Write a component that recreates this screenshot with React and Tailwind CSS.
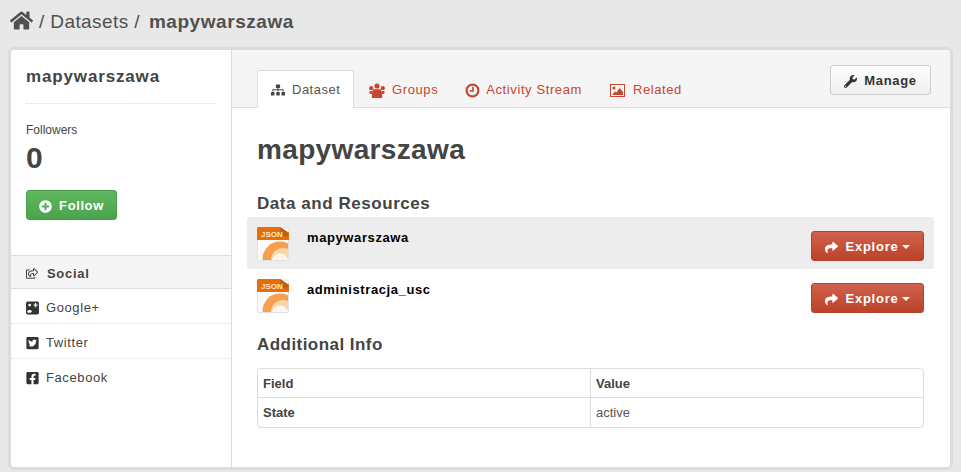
import React from 'react';
import {
  FaHome, FaSitemap, FaWrench, FaShare, FaPlusCircle,
  FaTwitterSquare, FaFacebookSquare, FaRegShareSquare,
} from 'react-icons/fa';

const JsonIcon = () => (
  <svg width="32" height="34" viewBox="0 0 32 34" className="shrink-0">
    <defs>
      <clipPath id="page">
        <rect x="1" y="12" width="30" height="21" />
      </clipPath>
    </defs>
    <rect x="0.5" y="1" width="31" height="32.5" rx="1.5" fill="#fbfbfb" stroke="#e2e2e2" />
    <g clipPath="url(#page)">
      <circle cx="23" cy="32" r="17.5" fill="#f6a04d" />
      <circle cx="26" cy="33" r="12" fill="#fbd3a8" />
      <circle cx="23" cy="35" r="8.5" fill="#fdf6ee" />
    </g>
    <path d="M1 0 H23 L32 6 V13 H0 V1 Z" fill="#e56f05" />
    <path d="M23 0 L32 6 L30 10 L24 8 Z" fill="#bd6212" />
    <text x="4" y="9.5" fontSize="8" fontWeight="700" fill="#ffe6cf" fontFamily="Liberation Sans, sans-serif">JSON</text>
  </svg>
);

const GroupsIcon = () => (
  <svg width="16" height="15" viewBox="0 0 16 15" fill="currentColor" className="shrink-0">
    <circle cx="8" cy="3" r="2.6" />
    <circle cx="2.2" cy="5.2" r="2.1" />
    <circle cx="13.8" cy="5.2" r="2.1" />
    <path d="M4.6 6.2 H11.4 C12.6 7.2 13.2 9 13.2 15 H2.8 C2.8 9 3.4 7.2 4.6 6.2 Z" />
    <path d="M0.4 8 H3.4 L2.8 11 H0.8 Z" />
    <path d="M15.6 8 H12.6 L13.2 11 H15.2 Z" />
  </svg>
);

const ClockIcon = () => (
  <svg width="15" height="15" viewBox="0 0 15 15" fill="none" stroke="currentColor" className="shrink-0">
    <circle cx="7.5" cy="7.5" r="5.9" strokeWidth="2.2" />
    <path d="M8 3.8 V8 H4.6" strokeWidth="1.6" />
  </svg>
);

const PictureIcon = () => (
  <svg width="15" height="13" viewBox="0 0 15 13" className="shrink-0">
    <rect x="0.5" y="0.5" width="14" height="12" fill="none" stroke="currentColor" />
    <circle cx="4" cy="4" r="1.5" fill="currentColor" />
    <path d="M2 11 L5 7.5 L6.5 8.5 L9.5 4 L13 8 V11 Z" fill="currentColor" />
  </svg>
);

const GooglePlusIcon = ({ className }) => (
  <svg viewBox="0 0 12 13" className={className}>
    <rect x="0" y="0.5" width="12" height="12" rx="1.5" fill="currentColor" />
    <circle cx="3.4" cy="3.8" r="1.3" fill="#fff" />
    <path d="M1 9.5 C2 8 4.5 8 5.5 9.5 L4.5 11 H1.5 Z" fill="#fff" />
    <path d="M7 3.2 H8.2 V1.8 H9.4 V3.2 H10.8 V4.4 H9.4 V5.8 H8.2 V4.4 H7 Z" fill="#fff" />
  </svg>
);

const tabs = [
  { label: 'Groups', icon: GroupsIcon, box: 'ml-[15px] mr-[12px] gap-[7px]' },
  { label: 'Activity Stream', icon: ClockIcon, box: 'ml-[15px] mr-[13px] gap-[6px]' },
  { label: 'Related', icon: PictureIcon, box: 'ml-[15px] gap-[8px]' },
];

const resources = [
  { name: 'mapywarszawa', bg: 'bg-[#ededed]' },
  { name: 'administracja_usc', bg: '' },
];

const social = [
  { label: 'Google+', icon: GooglePlusIcon, row: 'pt-[4px] border-b border-dotted border-[#dddddd]' },
  { label: 'Twitter', icon: FaTwitterSquare, row: 'pt-[4px] border-b border-dotted border-[#dddddd]' },
  { label: 'Facebook', icon: FaFacebookSquare, row: 'pt-[2px]' },
];

const Sidebar = () => (
  <aside className="w-[221px] shrink-0 border-r border-[#dddddd] flex flex-col">
    <div className="px-[15px] pt-[17px]">
      <h1 className="text-[17px] leading-5 font-bold tracking-[0.85px] pb-[16px] border-b border-dotted border-[#dddddd]">mapywarszawa</h1>
      <div className="text-[12px] leading-4 mt-[18px] text-[#444444]">Followers</div>
      <div className="text-[30px] leading-9 font-bold mt-[2px]">0</div>
      <button className="mt-[14px] w-[91px] h-[30px] pt-[2px] flex items-center justify-center gap-[7px] rounded-[3px] border border-[#4a9c4a] bg-gradient-to-b from-[#5fb960] to-[#4ca24d] text-white text-[13px] font-bold tracking-[0.6px]">
        <FaPlusCircle className="text-[13px]" />
        Follow
      </button>
    </div>
    <div className="mt-[35px] h-[34px] pt-[3px] flex items-center gap-[9px] px-[15px] bg-[#f5f5f5] border-y border-[#dddddd] text-[13px] font-bold tracking-[0.7px]">
      <FaRegShareSquare className="text-[13px] w-[12px]" />
      Social
    </div>
    {social.map(({ label, icon: Icon, row }) => (
      <div key={label} className={`h-[35px] flex items-center gap-[7px] px-[15px] text-[13px] tracking-[0.6px] text-[#444444] ${row}`}>
        <Icon className="text-[14px] w-[13px] h-[14px] text-[#333333]" />
        {label}
      </div>
    ))}
  </aside>
);

const Main = () => (
  <main className="flex-1 min-w-0">
    <div className="h-[58px] bg-[#f5f5f5] border-b border-[#dddddd] flex items-end pl-[25px] pr-[18px] relative">
      <div className="h-[38px] w-[97px] -mb-px bg-white border border-b-0 border-[#dddddd] rounded-t-[3px] flex items-center gap-[7px] pl-[13px] text-[13px] tracking-[0.5px] text-[#555555]">
        <FaSitemap className="text-[14px] text-[#444444]" />
        Dataset
      </div>
      {tabs.map(({ label, icon: Icon, box }) => (
        <div key={label} className={`h-[38px] pt-[4px] flex items-center ${box} text-[13px] tracking-[0.6px] text-[#c6462e]`}>
          <Icon />
          {label}
        </div>
      ))}
      <button className="absolute right-[19px] top-[15px] w-[101px] h-[30px] pt-[2px] flex items-center justify-center gap-[7px] rounded-[3px] border border-[#cccccc] bg-gradient-to-b from-white to-[#eeeeee] text-[13px] font-bold tracking-[0.7px] text-[#333333]">
        <FaWrench className="text-[13px]" />
        Manage
      </button>
    </div>
    <div className="pl-[25px] pr-[26px]">
      <h2 className="text-[28px] leading-9 font-bold tracking-[0.35px] mt-[24px]">mapywarszawa</h2>
      <h3 className="text-[17px] leading-5 font-bold tracking-[0.55px] mt-[26px]">Data and Resources</h3>
      <ul className="-mx-[10px] mt-[3px]">
        {resources.map(({ name, bg }) => (
          <li key={name} className={`h-[52px] flex items-start px-[10px] pt-[10px] rounded-[3px] ${bg}`}>
            <JsonIcon />
            <span className="ml-[18px] mt-px text-[13px] leading-5 font-bold tracking-[0.6px] text-black">{name}</span>
            <button className="ml-auto mt-[4px] w-[113px] h-[30px] pt-[2px] flex items-center justify-center gap-[8px] rounded-[3px] border border-[#b5432c] bg-gradient-to-b from-[#d1614c] to-[#ba4229] text-white text-[13px] font-bold tracking-[0.75px]">
              <FaShare className="text-[13px]" />
              <span className="flex items-center gap-[4px]">
                Explore
                <span className="w-0 h-0 border-x-[4px] border-x-transparent border-t-[4px] border-t-white" />
              </span>
            </button>
          </li>
        ))}
      </ul>
      <h3 className="text-[17px] leading-5 font-bold tracking-[0.45px] mt-[14px]">Additional Info</h3>
      <table className="w-[667px] mt-[13px] border-separate border-spacing-0 border border-[#dddddd] rounded-[4px] text-[13px] table-fixed">
        <tbody>
          <tr className="h-[29px]">
            <th className="w-[333px] text-left font-bold px-[5px] pt-px border-r border-b border-[#dddddd]">Field</th>
            <th className="text-left font-bold px-[5px] pt-px border-b border-[#dddddd]">Value</th>
          </tr>
          <tr className="h-[29px]">
            <th className="text-left font-bold px-[5px] border-r border-[#dddddd]">State</th>
            <td className="px-[5px] text-[#555555]">active</td>
          </tr>
        </tbody>
      </table>
    </div>
  </main>
);

const App = () => {
  return (
    <div className="w-[961px] h-[472px] overflow-hidden bg-[#e8e8e8] text-[#444444] [font-family:'Liberation_Sans',Arial,sans-serif]">
      <div className="h-[50px] flex items-start pl-[10px] pt-[8px] gap-[6px] text-[19px] leading-[27px] text-[#505050]">
        <FaHome className="text-[23px] mt-[1px]" />
        <span className="tracking-[0.4px]">/ Datasets /</span>
        <span className="font-bold tracking-[0.55px] ml-[3px]">mapywarszawa</span>
      </div>
      <div className="ml-[11px] w-[939px] h-[417px] flex bg-white rounded-[3px] shadow-[0_0_0_3px_#dcdcdc] overflow-hidden">
        <Sidebar />
        <Main />
      </div>
    </div>
  );
};

export default App;
